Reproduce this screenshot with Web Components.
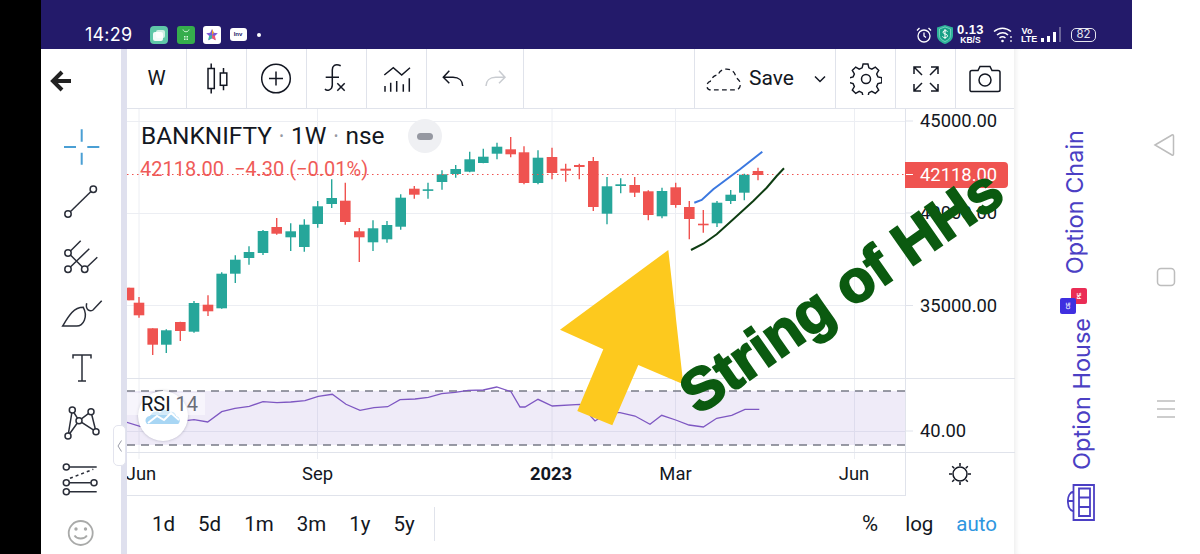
<!DOCTYPE html>
<html><head><meta charset="utf-8"><style>
html,body{margin:0;padding:0;background:#fff}
body{width:1200px;height:554px;overflow:hidden;font-family:Roboto,"Liberation Sans",sans-serif;color:#131722}
app-shell{display:flex;width:1200px;height:554px}
</style></head><body>
<app-shell></app-shell>
<script>
const def=(name,css,html,init)=>customElements.define(name,class extends HTMLElement{
  connectedCallback(){ if(this.shadowRoot) return; const r=this.attachShadow({mode:'open'}); r.innerHTML='<style>'+css+'</style>'+html; if(init) init(r,this);}
});

def('status-bar',`
:host{display:flex;align-items:center;height:49px;background:#231a6a;color:#fff;padding:20px 0 0 44px;box-sizing:border-box;flex:none}
.t{font:400 18px/1 Inter,sans-serif;letter-spacing:.2px;width:65px}
svg{display:block;flex:none}
.apps{display:flex;gap:8.5px;align-items:center;margin-left:-14px;padding-left:14px}
.sp{flex:1}
.right{display:flex;align-items:center;padding-right:36px}
.sp1{width:5px}
.speed{display:flex;flex-direction:column;align-items:center;font:700 11px/10px "Liberation Sans",sans-serif;margin:0 10px 0 5px;width:25px}
.speed b{font-size:13px;line-height:12px;letter-spacing:.4px}.speed span{font-size:8.5px;line-height:9px}
.vo{font:700 9px/8px "Liberation Sans",sans-serif;text-align:center;margin:0 8px 0 8px;width:12px}
.bat{width:25px;height:14px;border:1.5px solid #e6e6f0;border-radius:5px;box-sizing:border-box;font:400 11.5px/11px Inter,sans-serif;text-align:center;color:#e6e6f0;margin-left:10px}
.inv{width:17px;height:13px;background:#fff;border-radius:3px;color:#231a6a;font:700 6px/13px "Liberation Sans",sans-serif;text-align:center}
.dot{width:4px;height:4px;background:#fff;border-radius:50%;margin-left:10px}
`,`
<span class="t">14:29</span>
<div class="apps">
<svg width="18" height="18" viewBox="0 0 18 18"><rect width="18" height="18" rx="4" fill="#5fc7a8"/><rect x="6" y="4" width="9" height="8" rx="2" fill="#cfeee4"/><rect x="3" y="6" width="10" height="9" rx="2" fill="#fff" opacity=".92"/></svg>
<svg width="18" height="18" viewBox="0 0 18 18"><rect width="18" height="18" rx="3" fill="#35ad4c"/><path d="M6 3.5c.5 3 5.5 3 6 0" fill="none" stroke="#c9f2d1" stroke-width="1"/><path d="M7 10h1.5v1.500H7zM9.500 10H11v1.500H9.500zM7 12.500h1.500V14H7zM9.500 12.500H11V14H9.500z" fill="#d6f5dc"/></svg>
<svg width="18" height="18" viewBox="0 0 18 18"><rect width="18" height="18" rx="3" fill="#fff"/><path d="M9 3l1.800 3.800 4 .5-3 2.800.8 4.100L9 12.200l-3.600 2 .8-4.100-3-2.800 4-.5z" fill="#7b5bd6"/><path d="M9 3l1.800 3.800L9 9z" fill="#f6a623"/><path d="M9 9l3 1.100.6 4.100L9 12.200z" fill="#ef5a6f"/><path d="M9 9l-3 1.100-.6 4.100L9 12.200z" fill="#37b6a4"/></svg>
<span class="inv">lnv</span>
</div>
<span class="dot"></span>
<span class="sp"></span>
<div class="right">
<svg width="16" height="16" viewBox="0 0 16 16" fill="none" stroke="#fff" stroke-width="1.300"><circle cx="8" cy="9" r="6"/><path d="M8 5.500V9l2 1.500M1 3.500L3.500 1M15 3.500L12.500 1"/></svg>
<span class="sp1"></span>
<svg width="16" height="19" viewBox="0 0 16 19"><path d="M8 0l8 2.500v8C16 15 12 17.500 8 19 4 17.500 0 15 0 10.500v-8z" fill="#2fb39a"/><path d="M2.500 4l5.500-2 5.500 2v6.500c0 3-3 5-5.500 6-2.500-1-5.500-3-5.500-6z" fill="#16a085" stroke="#a7eadb" stroke-width=".6"/><path d="M10.500 6.500C10 5.500 6 5 6 7.200s4.500 1.300 4.500 3.600S6 13 5.500 11.500M8 4v10" fill="none" stroke="#fff" stroke-width="1"/></svg>
<div class="speed"><b>0.13</b><span>KB/S</span></div>
<svg width="20" height="17" viewBox="0 0 20 17" fill="none" stroke="#fff" stroke-width="1.500"><path d="M1 5.500c5-4.500 12-4.500 17 0M4 9c3.500-3 8-3 11 0M6.500 12c2-1.600 4-1.600 6 0"/><circle cx="9.500" cy="15" r="1.300" fill="#fff" stroke="none"/><path d="M18 10v2M18 14v2" stroke-width="1.200"/></svg>
<div class="vo">Vo<br>LTE</div>
<svg width="20" height="16" viewBox="0 0 20 16"><path d="M0 11h3v4H0zM6 9h3v6H6zM12 5h3v10h-3z" fill="#fff"/><path d="M18 0h2v15h-2z" fill="#6b6599"/></svg>
<div class="bat">82</div>
</div>`);

def('tool-rail',`
:host{display:block;width:80px;flex:none;background:#fff;position:relative;overflow:hidden}
svg{display:block}
`,`<svg width="80" height="505" viewBox="41 49 80 505" fill="none" stroke="#2a2e39" stroke-width="1.500">
<path d="M71 81H53M62 72l-9 9 9 9" stroke="#222" stroke-width="4"/>
<path d="M64 147h12M87.300 147h12M81.700 129.300v12.400M81.700 152.700v12" stroke="#4a9fd4" stroke-width="2"/>
<circle cx="68" cy="214" r="3.200"/><circle cx="93.300" cy="189.300" r="3.200"/><path d="M70.300 211.700l20.700-20.200"/>
<circle cx="68" cy="253" r="3.200"/><circle cx="68" cy="269.300" r="3.200"/><circle cx="84.700" cy="269.300" r="3.200"/>
<path d="M70.700 250.700l10-10M70.400 267l18.900-18.300M70.700 255.300l11.700 11.700M87.300 266.700l10-9.400"/>
<path d="M62.700 326h14c6.600 0 11.600-9.300 6.600-18.700-10 0-15 9.400-20.600 18.700z"/><path d="M86.700 303.300c-1.700 6.700 3.300 8.700 6.300 6.700l8.700-9.300"/>
<path d="M73 358.500V355h18v3.500M82 355v26M78 381h8"/>
<path d="M72.300 410L79 420.700 68 436zM91 411.700L79 420.700 96 431.700zM72.300 410l-4.300 26M91 411.700l5 20"/>
<g fill="#fff"><circle cx="72.300" cy="410" r="3"/><circle cx="91" cy="411.700" r="3"/><circle cx="79" cy="420.700" r="3"/><circle cx="96" cy="431.700" r="3"/><circle cx="68" cy="436" r="3"/></g>
<circle cx="66.300" cy="467" r="3"/><path d="M69.500 467h27.200M69.500 482.700h21.300M69.500 491.700h27.200"/><circle cx="66.300" cy="482.700" r="3"/><circle cx="94" cy="482.700" r="3"/><circle cx="66.300" cy="491.700" r="3"/><path d="M70 478.300l23.300-9" stroke-dasharray="3 3"/>
<g stroke="#a9aaa9" stroke-width="1.800"><circle cx="80.700" cy="533" r="12"/><path d="M74.500 535.500c2.500 4 10 4 12.400 0"/><circle cx="76" cy="529" r=".8" fill="#a9aaa9"/><circle cx="85.500" cy="529" r=".8" fill="#a9aaa9"/></g>
</svg>`);

def('tool-cell',`
:host{display:flex;align-items:center;justify-content:center;box-sizing:border-box;height:100%;border-right:1px solid #e0e3eb;flex:none;font:400 20.500px/1 Roboto,sans-serif;color:#131722}
`,`<slot></slot>`);

def('chart-toolbar',`
:host{display:flex;height:60px;box-sizing:border-box;border-bottom:1px solid #e0e3eb;background:#fff;flex:none;font:400 20.500px/1 Roboto,sans-serif}
tool-cell{width:60px}
svg{display:block;fill:none;stroke:#131722;stroke-width:1.500}
.undo{width:96.500px}
.gap{flex:1;border-right:1px solid #e0e3eb}
.save{width:141px;gap:6px;padding-left:1px}
.s{font:400 21px/1 Roboto,sans-serif;color:#131722}
`,`
<tool-cell>W</tool-cell>
<tool-cell><svg width="30" height="34" viewBox="0 0 30 34"><rect x="6" y="6.500" width="6.300" height="20"/><path d="M9.200 1.500V6.500M9.200 26.500v5"/><rect x="18.300" y="11" width="6.500" height="12.300"/><path d="M21.500 6v5M21.500 23.300v5"/></svg></tool-cell>
<tool-cell><svg width="32" height="32" viewBox="1 .5 32 32"><circle cx="16" cy="16" r="14.300"/><path d="M9 16h14M16 9v14"/></svg></tool-cell>
<tool-cell><svg width="26" height="32" viewBox="325 63 26 32"><path d="M341.700 65.700c-5.700-2.700-8.400.3-8.400 4.300v15c0 5-5.300 6.500-7.300 4M326.700 77.300H340M338.300 83.300l7.400 7.400M345.700 83.300l-7.400 7.400"/></svg></tool-cell>
<tool-cell><svg width="30" height="28" viewBox="382 64 30 28"><path d="M384.300 74l9-7.300 8.400 7.300 8.300-7.300M385 90.700V85M390.700 90.700v-9M396.700 90.700V80M403.300 90.700v-7.400M409.300 90.700V77.300"/></svg></tool-cell>
<tool-cell class="undo"><svg width="68" height="22" viewBox="441 68 68 22"><path d="M449.300 70.700l-6 6.600 6 6M443.300 77.300h9.700c6 0 9.700 3.500 9.700 8.700"/><path d="M499 70.700l6 6.600-6 6M505 77.300h-9.300c-6 0-9.700 3.500-9.700 8.700" stroke="#c9ccd1"/></svg></tool-cell>
<span class="gap" style="width:170.500px;flex:none"></span>
<tool-cell class="save"><svg width="38" height="26" viewBox="0 0 40 26" stroke-dasharray="5 3.500"><path d="M6 24.500C1 24.500 .500 17 5.500 15.500 8 10 11 9 14 8.500 16 1 29 0 32 9c1 4 3 3.500 5 7.500 1 4-1 8-5 8z" stroke-width="1.400"/></svg><span class="s">Save</span><svg width="12" height="8" viewBox="0 0 12 8" style="margin-left:14px"><path d="M1 1.500l5 5 5-5"/></svg></tool-cell>
<tool-cell><svg width="32" height="32" viewBox="0 0 32 32"><path d="M13.500 1.500h5l1 4 3 1.300 3.600-2.100 3.500 3.500-2.100 3.600 1.300 3 4 1v5l-4 1-1.300 3 2.100 3.600-3.500 3.500-3.600-2.100-3 1.300-1 4h-5l-1-4-3-1.300-3.600 2.100-3.500-3.500 2.100-3.600-1.300-3-4-1v-5l4-1 1.300-3-2.100-3.600 3.500-3.500 3.600 2.100 3-1.300z" transform="translate(0 -.500) scale(.97)"/><circle cx="16" cy="16" r="4.500"/></svg></tool-cell>
<tool-cell><svg width="26" height="26" viewBox="0 0 26 26"><path d="M1 8V1h7M1 1l8 8M25 8V1h-7M25 1l-8 8M1 18v7h7M1 25l8-8M25 18v7h-7M25 25l-8-8"/></svg></tool-cell>
<tool-cell style="border-right:0;flex:1"><svg width="32" height="28" viewBox="0 0 32 28"><path d="M3 5.500h6L11 1.500h10l2 4h6c1.400 0 2 .8 2 2v17.500c0 1-.6 1.500-2 1.500H3c-1.400 0-2-.5-2-1.500V7.500c0-1.200.6-2 2-2z"/><circle cx="16" cy="15" r="6"/></svg></tool-cell>
`);

def('chart-view',`
:host{display:block;position:relative;height:387px;flex:none;background:#fff;overflow:visible;font-family:Roboto,sans-serif}
.plot{position:relative;width:778px;height:387px;overflow:hidden}
.wrap{display:grid;grid-template-columns:778px 1fr;height:100%}
svg.c{display:block;position:absolute;left:0;top:0}
.axis{position:relative;height:387px;border-left:1px solid #e0e3eb;box-sizing:border-box}
.lb{position:absolute;transform:translateY(-50%);font:400 18.400px/1 Roboto,sans-serif;white-space:nowrap}
.p{left:14px;color:#131722}
.tag{position:absolute;left:-1px;top:53px;width:103px;height:26px;background:#ef5350;border-radius:0 4px 4px 0;color:#fff;font:400 18.400px/26px Roboto,sans-serif;padding-left:15px;box-sizing:border-box}
.tm{transform:translate(-50%,-50%);font-size:18.400px}
.legend{position:absolute;left:14px;top:13px;font:400 24.400px/28px Roboto,sans-serif;display:flex;align-items:center;white-space:nowrap}
.legend i{font-style:normal;color:#9598a1;font-size:12px;margin:0 7.500px}
.pill{position:absolute;left:281px;top:10px;width:34px;height:34px;border-radius:50%;background:#eff0f3;display:flex;align-items:center;justify-content:center}
.pill b{width:16px;height:7px;border-radius:4px;background:#9598a1;display:block}
.val{position:absolute;left:13px;top:49px;font:400 20px/22px Roboto,sans-serif;color:#ef5350;white-space:nowrap;opacity:.95}
.rsi{position:absolute;left:0;top:284px;height:22px;width:78px;background:rgba(255,255,255,.5);font:400 20px/22px Roboto,sans-serif;padding-left:14px;box-sizing:border-box;white-space:nowrap}
.rsi span{color:#6a6d78}
.fab{position:absolute;left:11px;top:282px;width:50px;height:50px;border-radius:50%;background:#fff;box-shadow:0 0 3px rgba(60,60,90,.35);display:flex;align-items:center;justify-content:center}
.tab{position:absolute;left:-14px;top:316px;width:11px;height:39px;background:#fff;border:1px solid #e3e4ee;border-radius:5px;z-index:3;display:flex;align-items:center;justify-content:center}
.ov{position:absolute;left:0;top:0;pointer-events:none}
.hh{position:absolute;left:577px;top:256px;transform-origin:0 100%;transform:rotate(-35deg);font:700 59px/1 "Liberation Sans",sans-serif;color:#0b5a10;-webkit-text-stroke:2.200px #0b5a10;white-space:nowrap;height:59px}
.sun{position:absolute;left:42px;top:353px}
`,`
<div class="wrap">
<div class="plot">
<svg class="c" id="s" width="778" height="387" viewBox="127 108 778 387"></svg>
<div class="fab"><svg width="36" height="16" viewBox="0 0 36 16"><path d="M2 16C-1 13 1 8 5 8c2-4 6-6 10-3 2-3 7-5 10-1 3-1 6 1 6 4 4 1 5 6 2 8z" fill="#a8d6f4"/><path d="M3 15l9-7 7 4 7-7 8 7" fill="none" stroke="#fff" stroke-width="2"/></svg></div>
<div class="rsi">RSI <span>14</span></div>
<div class="legend">BANKNIFTY<i>•</i>1W<i>•</i>nse</div>
<div class="val">42118.00 &nbsp;−4.30 (−0.01%)</div>
<div class="pill"><b></b></div>
<div class="lb tm" style="left:14px;top:365px">Jun</div>
<div class="lb tm" style="left:190.500px;top:365px">Sep</div>
<div class="lb tm" style="left:424px;top:365px;font-weight:700">2023</div>
<div class="lb tm" style="left:548.500px;top:365px">Mar</div>
<div class="lb tm" style="left:727px;top:365px">Jun</div>
</div>
<div class="axis">
<div class="lb p" style="top:12px">45000.00</div>
<div class="lb p" style="top:104px">40000.00</div>
<div class="lb p" style="top:196.500px">35000.00</div>
<div class="lb p" style="top:322px">40.00</div>
<div class="tag">42118.00</div>
<svg class="c" width="109" height="387" viewBox="0 0 109 387" style="pointer-events:none"><path d="M0 12h7M0 104h7M0 196.500h7M0 322h7" stroke="#e0e3eb"/><path d="M0 269.500h109M0 343.500h109" stroke="#e0e3eb"/><path d="M0 65.500h7" stroke="#fff"/></svg>
<svg class="sun" width="24" height="24" viewBox="0 0 24 24" fill="none" stroke="#131722" stroke-width="1.500"><circle cx="12" cy="12" r="7"/><path d="M12 1v3M12 20v3M1 12h3M20 12h3M4.200 4.200l2 2M17.800 17.800l2 2M4.200 19.800l2-2M17.800 6.200l2-2"/></svg>
</div>
</div>
<div class="tab"><svg width="7" height="14" viewBox="0 0 7 14" fill="none" stroke="#9a9ca8" stroke-width="1"><path d="M5.500 1.500L2 7l3.500 5.500"/></svg></div>
<svg class="ov" width="887" height="387" viewBox="127 108 887 387">
<polyline points="694.300,201.700 701.700,199 713.300,188.300 726.700,178.300 740,168.300 762.300,150.700" fill="none" stroke="#3b78e0" stroke-width="2"/>
<polyline points="691,249 703.300,242.700 716.700,233.300 733.300,218.300 753.300,200 766.700,186.700 776.700,175 784,167.300" fill="none" stroke="#0e3d12" stroke-width="2"/>
<polygon points="668.300,249 560,328.700 603.300,348.300 577.300,410 612.300,424.300 638.300,364 683.300,383.300" fill="#fdc91e"/>
</svg>
<div class="hh">String of HHs</div>
`,(r)=>{
 const C=[
 ['r',129,286.7,286.7,299.3,299.3],['r',139,296,301.7,314.3,316.7],['r',152.7,327.3,327.3,343.7,354],['g',166.3,328.3,329.3,343.7,352],['r',180.3,320.7,321,330,340],['g',194,300,302,330.7,331.7],['r',208,294.3,303.7,310.3,315],['g',221.7,271.3,272.7,307.3,307.7],['g',235.3,254.3,258.7,272.7,282],['g',249,245.3,251,257,263.7],['g',263,229,230,252,254],['r',276.7,217,226,232.7,233.7],['g',290.7,222.3,230.3,236.3,250],['g',304.3,218.3,223.7,246,250.7],['g',317.7,200,205.3,223,226.7],['g',331.7,178.3,197,203,207],['r',345.3,181.7,199.7,221,223.7],['r',359.3,227,230.3,236.3,261],['g',373,219.3,227.3,241.3,250],['g',387,220,224,238.3,241.7],['g',400.7,193.3,196.7,225.7,228.7],['r',414.3,185,187.7,193.7,197.7],['g',428,181.7,188.3,189.7,197.7],['g',442,169.3,173.3,181,188.7],['g',455.7,164,168,173,176.7],['g',469.7,150.7,158.3,170.7,171.3],['g',483.3,147.7,155.7,162,162.3],['g',497,141.7,145.7,152.7,158.3],['r',510.7,136,148.3,153.3,156.3],['r',524,145.3,151.3,182,183.3],['g',538,149.3,156.7,182,183.3],['r',552,146.7,156,172,178.3],['r',565.7,162.7,167.7,169.7,180.7],['r',579.3,162.7,164,166,178.3],['r',593.3,156,160,206,210],['g',607,176,185.3,212.7,223.3],['g',620.7,177.3,183.3,185,192.3],['r',634.7,176,184,191.7,196],['r',648.3,189.3,190.3,214,219.3],['g',662,186.7,190,215.3,217.3],['r',675.7,181.7,186.3,204,206.7],['r',689.3,200,206,218,238.3],['r',703.3,209,222.7,224.3,231.7],['g',717,200,201.7,222.3,226],['g',730.7,189,193.7,200,203],['g',744.3,172.7,173.7,191.7,199.3],['r',758,166.7,170,174,179.3]];
 const col={g:'#26a69a',r:'#ef5350'};
 let h='';
 const g='#eceef3';
 for(const y of [120.5,212.5,304.5,430.5]) h+=`<path d="M127 ${y}H905" stroke="${g}"/>`;
 for(const x of [139,317.5,552,675.5,854.5]) h+=`<path d="M${x} 108V458" stroke="${g}"/>`;
 h+=`<path d="M127 377.500H905M127 451.500H905M127 494.500H905" stroke="#e0e3eb"/>`;
 h+=`<rect x="127" y="390" width="778" height="54" fill="#7e57c2" fill-opacity=".12"/>`;
 h+=`<path d="M127 390H905M127 444H905" stroke="#787b86" stroke-width="1.500" stroke-dasharray="8 6"/>`;
 const P=[[126.7,421.3],[140,425.3],[194,418.7],[207.7,421],[221.7,410.7],[235,407.3],[249.3,405.3],[263,400.7],[277,401.7],[290.7,401],[305,399.7],[318.3,395.3],[332.3,393.3],[346,403.3],[360,409.3],[374,406.7],[387.7,405.7],[400,398.7],[415,398],[428.3,396.3],[441.7,392.7],[455,391.3],[468.3,389.3],[483.3,389],[496.7,386],[511,390.7],[520,406],[525,406],[538,398.3],[552.3,405],[580,403.3],[595,420],[608,411.7],[620,411.7],[635,415],[650,423.3],[661.7,414.3],[675.7,419],[689,424],[703.3,426],[716.7,417.3],[731.7,414.3],[745,408.3],[759.3,408.3]];
 h+=`<polyline points="${P.map(p=>p.join(',')).join(' ')}" fill="none" stroke="#7e57c2" stroke-width="1.300"/>`;
 for(const [k,x,wt,bt,bb,wb] of C){
  h+=`<path d="M${x} ${wt}V${wb}" stroke="${col[k]}" stroke-width="1.400"/><rect x="${x-5.3}" y="${bt}" width="10.600" height="${Math.max(bb-bt,1.6)}" fill="${col[k]}"/>`;
 }
 h+=`<path d="M127 173.500H905" stroke="#ef5350" stroke-width="1.200" stroke-dasharray="1.500 3.500"/>`;
 r.getElementById('s').innerHTML=h;
});

def('range-bar',`
:host{display:flex;align-items:center;height:59px;flex:none;background:#fff;font:400 20.500px/1 Roboto,sans-serif;padding:0 17px 3px 25px;box-sizing:border-box;color:#131722}
.l{display:flex;gap:23px}
.d{width:1px;height:34px;background:#e0e3eb;margin-left:19px}
.sp{flex:1}
.r{display:flex;gap:23px;align-items:center}
.a{color:#2e96e0}
.pc{font-size:22px;margin-right:4px}
`,`<div class="l"><span>1d</span><span>5d</span><span>1m</span><span>3m</span><span>1y</span><span>5y</span></div><span class="d"></span><span class="sp"></span><div class="r"><span class="pc">%</span><span>log</span><span class="a">auto</span></div>`);

def('side-rail',`
:host{display:block;position:relative;width:118px;flex:none;background:#fff;box-shadow:inset 5px 0 5px -3px rgba(0,0,0,.07);color:#4b3fc4;font:400 23.500px/24px Inter,"Liberation Sans",sans-serif}
.v{writing-mode:vertical-rl;transform:rotate(180deg);white-space:nowrap;position:absolute}
.bd{position:absolute;width:16px;height:16px;border-radius:2px;color:#fff;font:700 5px/16px "Liberation Sans",sans-serif;text-align:center}
.bd span{display:block;transform:rotate(-90deg)}
svg{position:absolute;left:53px;top:435px}
`,`<div class="v" style="left:49px;top:81px">Option Chain</div>
<div class="bd" style="left:57px;top:239px;background:#ea2c55"><span>PE</span></div>
<div class="bd" style="left:46px;top:249px;background:#3f2fe0"><span>CE</span></div>
<div class="v" style="left:56px;top:269px">Option House</div>
<svg width="28" height="37" viewBox="0 0 28 37" fill="none" stroke="#4b3fc4" stroke-width="1.800"><path d="M6.500 1h20.500v35H6.500zM12 4.500h11v27.500H12zM12 13.500h11M12 23h11M6.500 7.500C-1 9-1 25 6.500 27.500M1.500 17h5"/></svg>`);

def('nav-rail',`
:host{display:block;width:68px;flex:none;background:#fff;position:relative}
svg{display:block}
`,`<svg width="68" height="554" viewBox="1132 0 68 554" fill="none" stroke="#bdbdbd" stroke-width="1.500"><path d="M1155 145l17-10c.8-.4 1.500 0 1.500 1v18c0 1-.7 1.400-1.500 1z"/><rect x="1157.500" y="268.500" width="17" height="17" rx="3.500"/><path d="M1157 401h18M1157 409h18M1157 417h18"/></svg>`);

def('app-shell',`
:host{display:flex;width:1200px;height:554px}
.black{width:41px;background:#000;flex:none}
.mid{display:flex;flex-direction:column;width:1091px;flex:none}
.row{display:flex;flex:1;min-height:0}
.stripe{width:6px;background:#dfe0ee;flex:none}
.chart{display:flex;flex-direction:column;width:887px;flex:none;position:relative;z-index:1}
`,`<div class="black"></div>
<div class="mid"><status-bar></status-bar>
<div class="row"><tool-rail></tool-rail><div class="stripe"></div>
<div class="chart"><chart-toolbar></chart-toolbar><chart-view></chart-view><range-bar></range-bar></div>
<side-rail></side-rail></div></div>
<nav-rail></nav-rail>`);
</script>
</body></html>
